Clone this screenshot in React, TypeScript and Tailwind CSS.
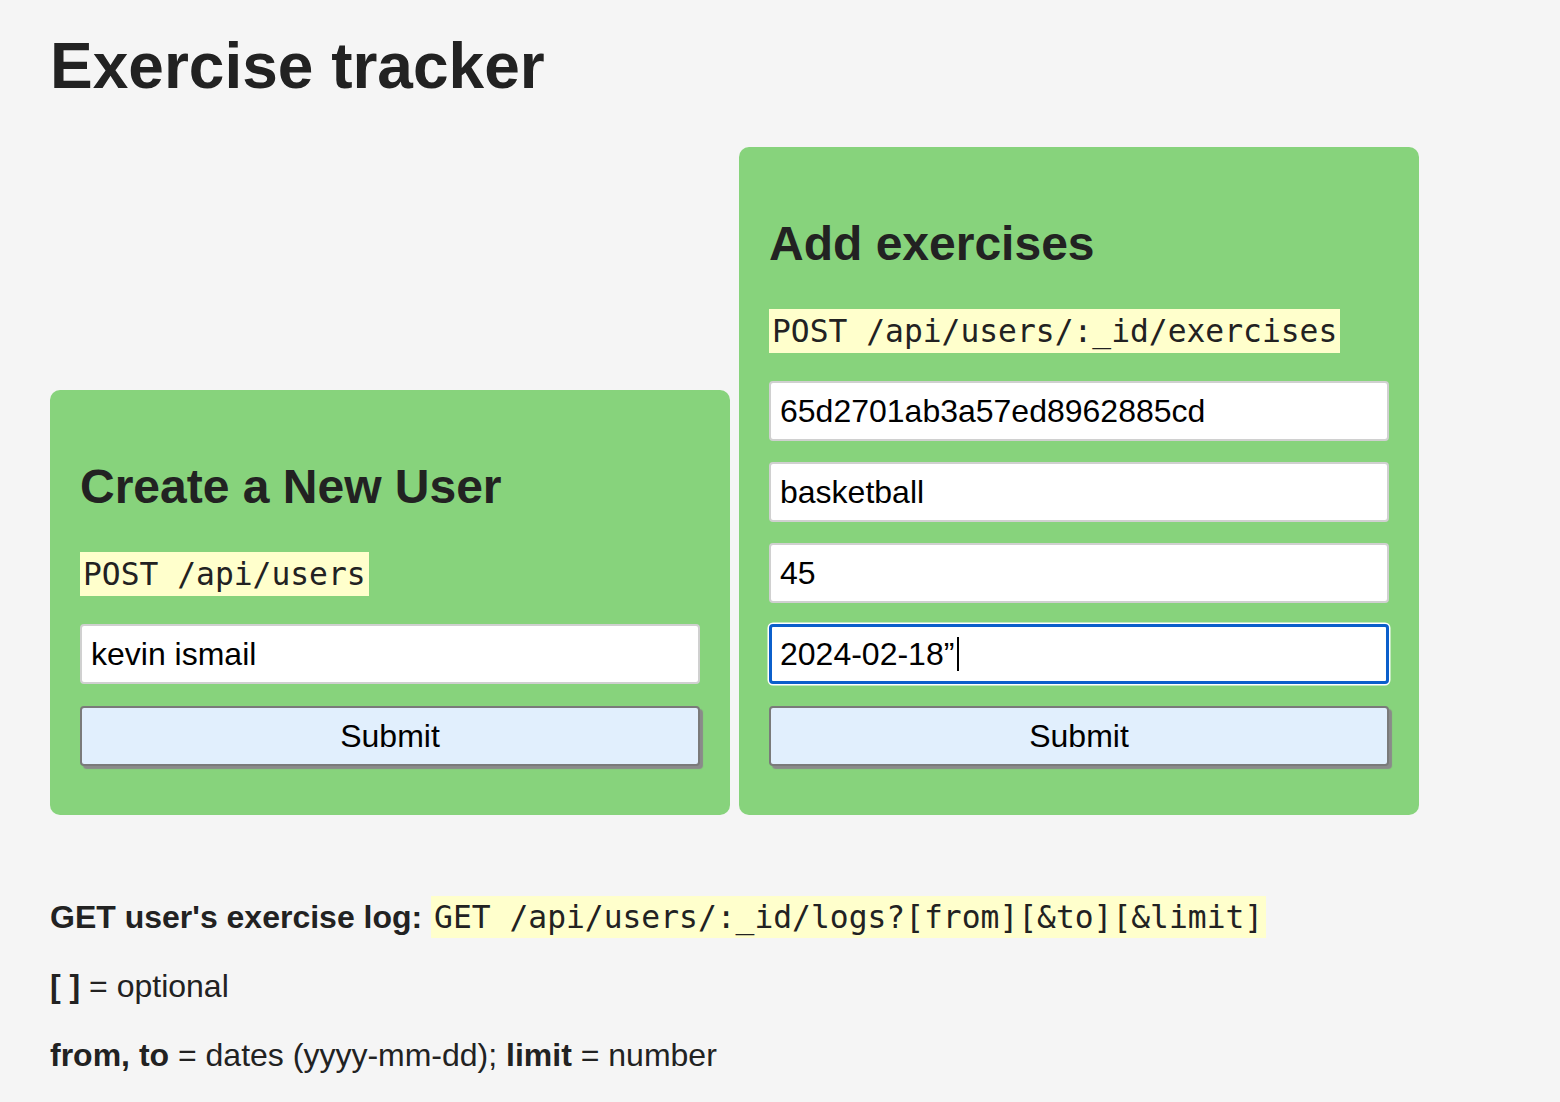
import React from 'react';

const sans = 'font-["Liberation_Sans",Arial,sans-serif]';
const mono = 'font-["DejaVu_Sans_Mono","Liberation_Mono",monospace]';

const Endpoint: React.FC<{ children: React.ReactNode }> = ({ children }) => (
  <div className="mt-[38px] h-[44px]">
    <code className={`${mono} inline-block bg-[#ffffcc] px-[3px] text-[31.3px] leading-[44px] text-[#222]`}>
      {children}
    </code>
  </div>
);

const Field: React.FC<{ value: string; first?: boolean; focused?: boolean }> = ({ value, first, focused }) => (
  <div
    className={`${first ? 'mt-[28px]' : 'mt-[21px]'} flex h-[60px] items-center rounded-[4px] bg-white text-[32px] text-black ${
      focused
        ? 'border-[3px] border-[#0b5fcb] px-[8px] shadow-[0_0_0_1.5px_#ffffff]'
        : 'border-2 border-[#d0d0d0] px-[9px]'
    }`}
  >
    <span className="whitespace-pre">{value}</span>
    {focused && <span className="ml-[3px] inline-block h-[34px] w-[2px] bg-black" />}
  </div>
);

const SubmitButton: React.FC = () => (
  <div className="mt-[22px] flex h-[60px] items-center justify-center rounded-[4px] border-2 border-[#7a7a7a] bg-[#e1effd] text-[32px] text-black shadow-[3px_3px_1px_#8a8a8a]">
    Submit
  </div>
);

const Card: React.FC<{ title: string; endpoint: string; children: React.ReactNode }> = ({ title, endpoint, children }) => (
  <div className="w-[680px] rounded-[10px] bg-[#87d37c] px-[30px] pb-[49px] pt-[30px]">
    <h2 className="mt-[39px] text-[48px] font-bold leading-[55px] text-[#222]">{title}</h2>
    <Endpoint>{endpoint}</Endpoint>
    {children}
    <SubmitButton />
  </div>
);

export default function App() {
  return (
    <div className={`${sans} min-h-[1102px] bg-[#f5f5f5] px-[50px] pt-[29px] text-[#222]`}>
      <h1 className="text-[64px] font-bold leading-[74px]">Exercise tracker</h1>

      <div className="mt-[44px] flex items-end gap-[9px]">
        <Card title="Create a New User" endpoint="POST /api/users">
          <Field value="kevin ismail" first />
        </Card>
        <Card title="Add exercises" endpoint="POST /api/users/:_id/exercises">
          <Field value="65d2701ab3a57ed8962885cd" first />
          <Field value="basketball" />
          <Field value="45" />
          <Field value="2024-02-18”" focused />
        </Card>
      </div>

      <div className="mt-[84px] text-[32px] leading-[37px]">
        <p className="mb-[32px]">
          <b>GET user's exercise log:</b>{' '}
          <code className={`${mono} bg-[#ffffcc] px-[3px] py-[3px] text-[31.3px]`}>
            GET /api/users/:_id/logs?[from][&amp;to][&amp;limit]
          </code>
        </p>
        <p className="mb-[32px]">
          <b>[ ]</b> = optional
        </p>
        <p>
          <b>from, to</b> = dates (yyyy-mm-dd); <b>limit</b> = number
        </p>
      </div>
    </div>
  );
}
